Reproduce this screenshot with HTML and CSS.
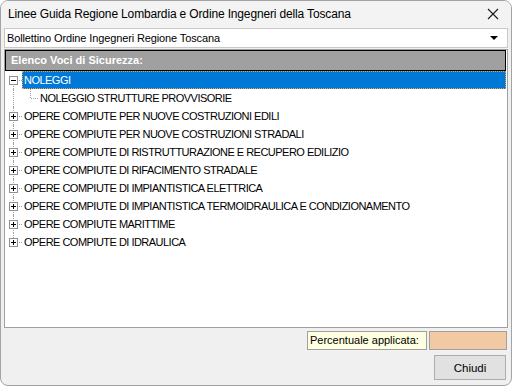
FILE: index.html
```html
<!DOCTYPE html>
<html lang="it">
<head>
  <meta charset="UTF-8">
  <title>Linee Guida Regione Lombardia e Ordine Ingegneri della Toscana</title>
  <link rel="stylesheet" href="styles.css">
</head>
<body>
  <div class="window">
    <div class="titlebar">
      <span class="title">Linee Guida Regione Lombardia e Ordine Ingegneri della Toscana</span>
      <svg class="close" width="12" height="12" viewBox="0 0 12 12">
        <path d="M1 1 L11 11 M11 1 L1 11" stroke="#1a1a1a" stroke-width="1.1" fill="none"/>
      </svg>
    </div>

    <div class="combo">
      <span class="combo-text">Bollettino Ordine Ingegneri Regione Toscana</span>
      <span class="arrow"></span>
    </div>

    <div class="panel">
      <div class="panel-head">Elenco Voci di Sicurezza:</div>
      <ul class="tree">
        <li class="node first">
          <div class="row">
            <span class="twig"><span class="box minus"></span></span>
            <span class="label selected">NOLEGGI</span>
          </div>
          <div class="row">
            <span class="indent"></span>
            <span class="elbow"></span>
            <span class="label">NOLEGGIO STRUTTURE PROVVISORIE</span>
          </div>
        </li>
        <li class="node">
          <div class="row"><span class="twig"><span class="box"></span></span><span class="label">OPERE COMPIUTE PER NUOVE COSTRUZIONI EDILI</span></div>
        </li>
        <li class="node">
          <div class="row"><span class="twig"><span class="box"></span></span><span class="label">OPERE COMPIUTE PER NUOVE COSTRUZIONI STRADALI</span></div>
        </li>
        <li class="node">
          <div class="row"><span class="twig"><span class="box"></span></span><span class="label">OPERE COMPIUTE DI RISTRUTTURAZIONE E RECUPERO EDILIZIO</span></div>
        </li>
        <li class="node">
          <div class="row"><span class="twig"><span class="box"></span></span><span class="label">OPERE COMPIUTE DI RIFACIMENTO STRADALE</span></div>
        </li>
        <li class="node">
          <div class="row"><span class="twig"><span class="box"></span></span><span class="label">OPERE COMPIUTE DI IMPIANTISTICA ELETTRICA</span></div>
        </li>
        <li class="node">
          <div class="row"><span class="twig"><span class="box"></span></span><span class="label">OPERE COMPIUTE DI IMPIANTISTICA TERMOIDRAULICA E CONDIZIONAMENTO</span></div>
        </li>
        <li class="node">
          <div class="row"><span class="twig"><span class="box"></span></span><span class="label">OPERE COMPIUTE MARITTIME</span></div>
        </li>
        <li class="node last">
          <div class="row"><span class="twig"><span class="box"></span></span><span class="label">OPERE COMPIUTE DI IDRAULICA</span></div>
        </li>
      </ul>
    </div>

    <div class="footer">
      <div class="percent">
        <span class="percent-label">Percentuale applicata:</span>
        <span class="percent-value"></span>
      </div>
      <button class="btn">Chiudi</button>
    </div>
  </div>
</body>
</html>
```

FILE: styles.css
```css
* { box-sizing: border-box; margin: 0; padding: 0; }
body { background: #fff; font-family: "Liberation Sans", Arial, sans-serif; font-size: 11px; color: #000; }

.window { width: 512px; height: 386px; border: 1px solid #a3a3a3; border-radius: 8px; background: #f0f0f0; display: flex; flex-direction: column; overflow: hidden; }

.titlebar { height: 27px; display: flex; align-items: center; justify-content: space-between; padding: 0 12px 1px 7px; background: #f3f3f3; }
.title { font-size: 12px; color: #000; letter-spacing: -0.15px; }
.close { display: block; }

.combo { height: 20px; margin: 0 3px 0 3px; border: 1px solid #c8c8c8; background: #fff; display: flex; align-items: center; justify-content: space-between; padding: 0 9px 0 2px; }
.combo-text { letter-spacing: -0.12px; }
.arrow { width: 0; height: 0; border-left: 4px solid transparent; border-right: 4px solid transparent; border-top: 4px solid #000; }

.panel { height: 279px; margin: 1px 3px 0 3px; border: 1px solid #a0a0a0; background: #fff; }
.panel-head { height: 21px; margin-right: 1px; border: 1px solid #000; background: #a0a0a0; color: #fff; font-weight: bold; line-height: 19px; padding-left: 5px; }

.tree { list-style: none; padding-left: 3px; }
.row { display: flex; height: 18px; align-items: center; }
.label { height: 18px; line-height: 18px; padding: 0 2px; white-space: nowrap; letter-spacing: -0.52px; }
.label.selected { flex: 1; margin-right: 1px; background: #0078d7; color: #fff; outline: 1px dotted #f0a040; outline-offset: -1px; }

/* tree lines */
.twig, .indent, .elbow { position: relative; height: 18px; flex: none; }
.twig { width: 14px; display: flex; align-items: center; }
.twig::before { content: ""; position: absolute; left: 5px; top: 0; bottom: 0; border-left: 1px dotted #a0a0a0; }
.node.first > .row .twig::before { top: 9px; }
.node.last > .row .twig::before { bottom: 9px; }
.twig::after { content: ""; position: absolute; left: 6px; right: 0; top: 9px; border-top: 1px dotted #a0a0a0; }
.box { position: relative; z-index: 1; width: 9px; height: 9px; margin-left: 1px; border: 1px solid #919191; background: #fff; }
.box::before { content: ""; position: absolute; left: 1px; top: 3px; width: 5px; height: 1px; background: #000; }
.box::after { content: ""; position: absolute; left: 3px; top: 1px; width: 1px; height: 5px; background: #000; }
.box.minus::after { display: none; }

.indent { width: 14px; }
.indent::before { content: ""; position: absolute; left: 5px; top: 0; bottom: 0; border-left: 1px dotted #a0a0a0; }
.elbow { width: 16px; }
.elbow::before { content: ""; position: absolute; left: 8px; top: 0; height: 9px; border-left: 1px dotted #a0a0a0; }
.elbow::after { content: ""; position: absolute; left: 9px; right: 0; top: 9px; border-top: 1px dotted #a0a0a0; }

.footer { display: flex; flex-direction: column; align-items: flex-end; padding: 3px 4px 0 0; }
.percent { display: flex; gap: 2px; }
.percent-label { height: 19px; width: 120px; border: 1px solid #a0a0a0; background: #ffffe1; line-height: 17px; padding-left: 2px; }
.percent-value { height: 19px; width: 78px; border: 1px solid #a0a0a0; background: #f1c9a3; }
.btn { margin-top: 5px; margin-right: 1px; width: 72px; height: 25px; border: 1px solid #adadad; background: #e1e1e1; font-family: "Liberation Sans", Arial, sans-serif; font-size: 11.5px; color: #000; }
```
